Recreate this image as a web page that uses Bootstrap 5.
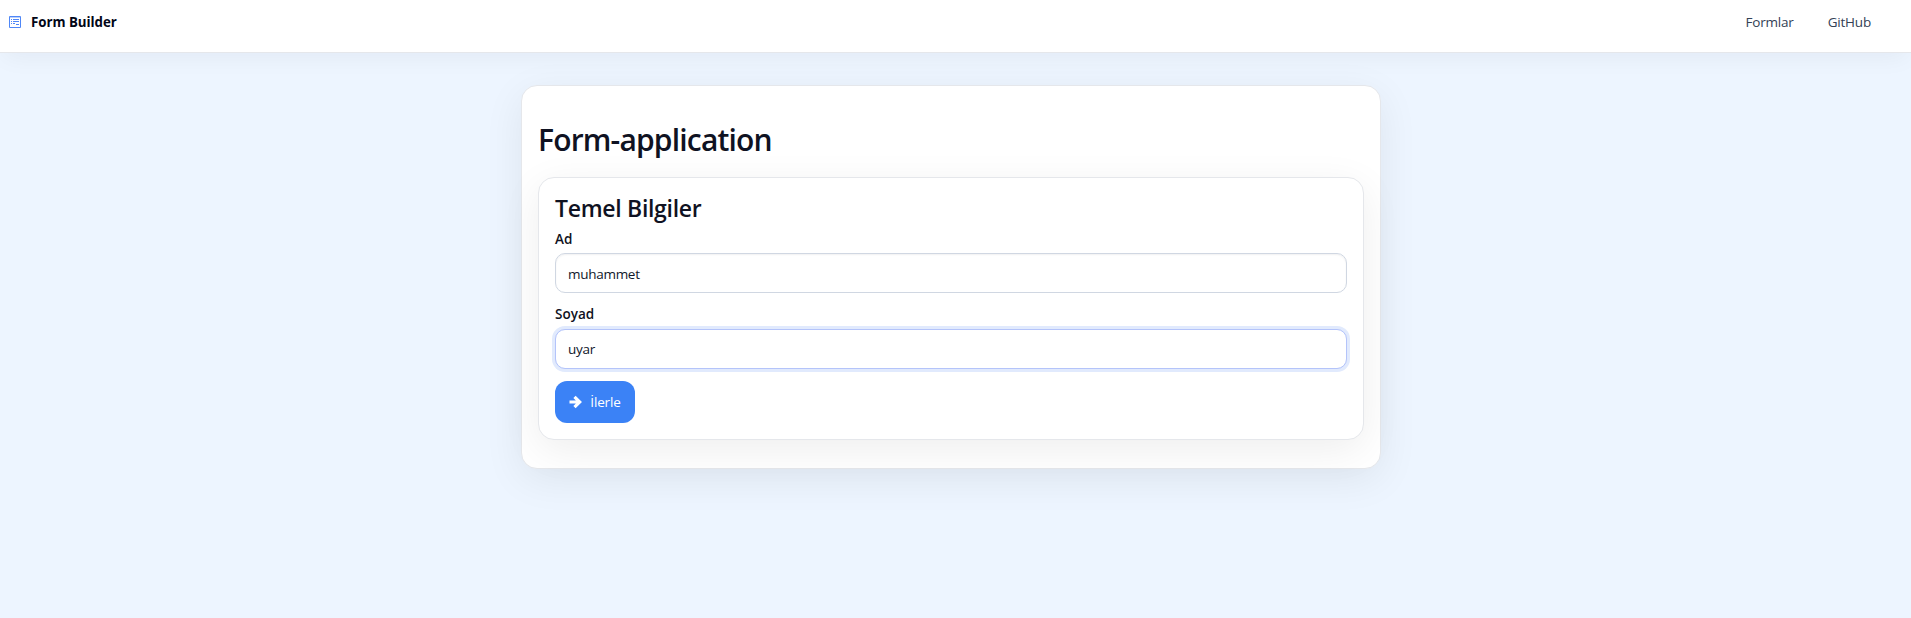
<!DOCTYPE html>
<html lang="tr">
<head>
<meta charset="utf-8">
<meta name="viewport" content="width=device-width, initial-scale=1">
<title>Form Builder</title>
<link href="https://cdn.jsdelivr.net/npm/bootstrap@5.3.0/dist/css/bootstrap.min.css" rel="stylesheet">
<style>
body{background:#edf5ff;color:#0f172a;font-family:"Segoe UI","Open Sans","Noto Sans",sans-serif;font-size:14px;line-height:20px;min-height:100vh}
.topbar{height:53px;padding:0 26px 8px 9px;border-bottom:1px solid #e5e7eb;box-shadow:0 8px 24px -4px rgba(20,0,30,.05)}
.topbar .navbar-brand{font-size:13.3px;font-weight:700;line-height:20px;gap:10px;color:#020617;letter-spacing:-.03px}
.topbar .nav-link{font-size:13.5px;color:#334155;padding:0 14px;line-height:20px;margin-left:6px;letter-spacing:-.2px}
.panel{border:1px solid #e5e7eb;border-radius:16px;box-shadow:0 10px 40px rgba(0,0,0,.07);background:#fff}
.outer{width:860px;height:384px;margin:32px 0 0 521px;padding:34px 16px 0}
.inner{height:263px;padding:16px 16px 0;margin-top:17px}
h1{font-size:30px;line-height:40px;font-weight:600;color:#0f1222;margin:0;letter-spacing:-.82px}
h2{font-size:23px;line-height:30px;font-weight:600;color:#0f1222;margin:-1px 0 6px;letter-spacing:-.3px}
.form-label{font-size:13.5px;font-weight:600;color:#0f1222;line-height:20px;margin:0 0 4px;display:block}
.form-control + .form-label{margin:11px 0 5px}
.inner .form-control{height:40px;font-size:13.5px;line-height:20px;padding:9px 12px 7px;border-color:#d0d7e2;border-radius:10px;color:#0f172a;letter-spacing:-.28px;box-shadow:inset 0 1px 2px rgba(15,23,42,.06)}
.inner .form-control.active{padding:8px 12px;border-color:#b4c4fa;box-shadow:0 0 0 3px #e1eafd}
.btn-next{width:80px;height:42px;border:0;margin-top:12px;border-radius:12px;background:#3b82f6;color:#fff;font-size:13.5px;letter-spacing:-.15px;line-height:20px;padding:0;gap:8px}
.btn-next:hover{background:#2563eb;color:#fff}
</style>
</head>
<body>
<nav class="navbar topbar bg-white d-flex flex-nowrap justify-content-between align-items-center">
  <a class="navbar-brand d-flex align-items-center m-0 p-0" href="#">
    <svg width="12" height="12" viewBox="0 0 12 12" fill="none" stroke="#4f87f7" aria-hidden="true"><path d="M.5 .5h11v11H.5zM2 3.5h1M4 3.5h6M2 5.500h1M4 5.500h6M2 7.500h1M4 7.500h2M7 8.500h3"/><path d="M1 1.500h10" stroke-opacity=".4"/></svg>
    <span>Form Builder</span>
  </a>
  <div class="nav flex-nowrap">
    <a class="nav-link" href="#">Formlar</a>
    <a class="nav-link" href="#">GitHub</a>
  </div>
</nav>
<main class="panel outer">
  <h1><span>Form-application</span></h1>
  <section class="panel inner">
    <h2><span>Temel Bilgiler</span></h2>
    <label class="form-label" for="ad"><span>Ad</span></label>
    <input class="form-control" id="ad" type="text" value="muhammet">
    <label class="form-label" for="soyad"><span>Soyad</span></label>
    <input class="form-control active" id="soyad" type="text" value="uyar">
    <button class="btn btn-next d-flex align-items-center justify-content-center" type="button">
      <svg width="13" height="14" viewBox="0 0 13 14" fill="none" stroke="#fff" stroke-width="3.2" aria-hidden="true"><path d="M.5 7h10M5.500 1.800 10.700 7l-5.200 5.200"/></svg>
      <span>İlerle</span>
    </button>
  </section>
</main>
<script src="https://cdn.jsdelivr.net/npm/bootstrap@5.3.0/dist/js/bootstrap.bundle.min.js"></script>
</body>
</html>
